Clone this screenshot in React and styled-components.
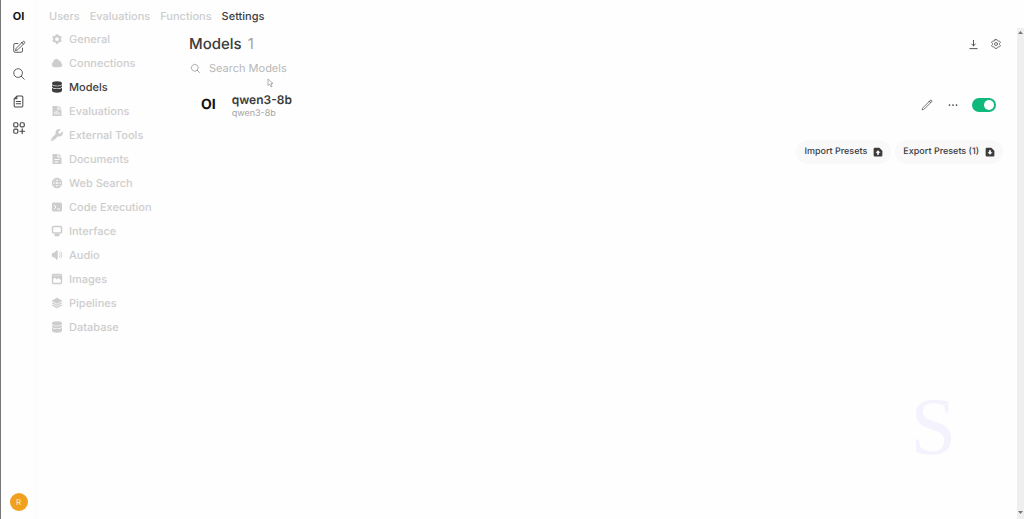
import React, { useState } from 'react'
import styled, { createGlobalStyle } from 'styled-components'
import {
  HiCog6Tooth,
  HiCloud,
  HiSpeakerWave,
  HiSquare3Stack3D,
  HiEllipsisHorizontal,
  HiOutlinePencil,
  HiOutlinePencilSquare,
  HiOutlineMagnifyingGlass,
  HiOutlineCog6Tooth
} from 'react-icons/hi2'
import { FaWrench } from 'react-icons/fa6'

const color = {
  text: '#3c3c3c',
  muted: '#cdcdcd',
  mutedDark: '#a4a4a4',
  accent: '#0fb97c',
  avatar: '#f0a01c',
  pill: '#f9f9fa',
  track: '#efefef'
}

const GlobalStyle = createGlobalStyle`
  * {
    box-sizing: border-box;
  }
  body {
    margin: 0;
    background: #fefefe;
    color: ${color.text};
    font-family: Inter, "Liberation Sans", sans-serif;
    font-size: 11px;
    line-height: 16px;
    text-rendering: geometricPrecision;
  }
  button, input {
    font: inherit;
    color: inherit;
    text-rendering: inherit;
    border: 0;
    padding: 0;
    background: none;
  }
  a {
    color: inherit;
    text-decoration: none;
  }
  svg {
    display: block;
    flex: none;
  }
`

const Page = styled.div`
  display: flex;
  min-height: 100vh;
  border-left: 1px solid #777777;
`

const Rail = styled.aside`
  display: flex;
  flex-direction: column;
  align-items: center;
  width: 36px;
  padding: 8px 0;
  border-right: 1px solid #fafafa;
`

const Logo = styled.a`
  font-size: ${props => (props.$large ? 14 : 11)}px;
  font-weight: 700;
  line-height: 16px;
  color: #111111;
`

const RailNav = styled.nav`
  display: flex;
  flex-direction: column;
  gap: 13px;
  margin-top: 16px;
`

const IconButton = styled.button`
  display: flex;
  align-items: center;
  justify-content: center;
  width: 14px;
  height: 14px;
  color: #484848;
`

const Avatar = styled.button`
  width: 18px;
  height: 18px;
  margin-top: auto;
  border-radius: 50%;
  background: ${color.avatar};
  color: #fdf0d5;
  font-size: 8px;
  text-align: center;
`

const Main = styled.div`
  display: flex;
  flex: 1;
  flex-direction: column;
  min-width: 0;
`

const Tabs = styled.nav`
  display: flex;
  gap: 10px;
  height: 28px;
  padding: 8px 12px 0;
  font-weight: 500;
`

const Tab = styled.a`
  color: ${props => (props.$active ? color.text : color.muted)};
`

const Body = styled.div`
  display: flex;
  flex: 1;
`

const Menu = styled.nav`
  display: flex;
  flex-direction: column;
  gap: 8px;
  width: 152px;
  padding: 3px 0 0 14px;
`

const MenuItem = styled.a`
  display: flex;
  align-items: center;
  gap: 6px;
  font-weight: 500;
  color: ${props => (props.$active ? color.text : color.muted)};
`

const Content = styled.main`
  display: flex;
  flex: 1;
  flex-direction: column;
  padding: 6px 14px 0 0;
`

const Header = styled.header`
  display: flex;
  align-items: center;
  justify-content: space-between;
  height: 20px;
`

const Title = styled.h1`
  display: flex;
  gap: 6px;
  margin: 0;
  font-size: 15px;
  font-weight: 500;
  line-height: 20px;
`

const Count = styled.span`
  color: ${color.mutedDark};
  font-weight: 400;
`

const Actions = styled.div`
  display: flex;
  align-items: center;
  gap: ${props => props.$gap}px;
`

const Search = styled.label`
  display: flex;
  align-items: center;
  gap: 8px;
  margin-top: 6px;
  padding-left: 1px;
  color: #888888;
`

const SearchInput = styled.input`
  flex: 1;
  height: 16px;
  outline: 0;
  &::placeholder {
    color: #b8b8b8;
    opacity: 1;
  }
`

const ModelRow = styled.article`
  display: flex;
  align-items: center;
  height: 36px;
  margin-top: 11px;
  padding: 0 7px 0 12px;
`

const ModelName = styled.div`
  flex: 1;
  margin-left: 16px;
  padding-top: 2px;
`

const ModelTitle = styled.h2`
  margin: 0;
  font-size: 12px;
  font-weight: 600;
  line-height: 16px;
`

const ModelId = styled.div`
  font-size: 9px;
  line-height: 12px;
  color: ${color.mutedDark};
`

const Switch = styled.input`
  appearance: none;
  display: flex;
  width: 24px;
  height: 14px;
  margin: 0;
  padding: 2px;
  border-radius: 7px;
  background: #dddddd;
  &::before {
    content: '';
    width: 10px;
    height: 10px;
    border-radius: 50%;
    background: #ffffff;
  }
  &:checked {
    justify-content: flex-end;
    background: ${color.accent};
  }
`

const Presets = styled.div`
  display: flex;
  justify-content: flex-end;
  gap: 4px;
  margin-top: 17px;
`

const PresetButton = styled.button`
  display: flex;
  align-items: center;
  gap: 6px;
  height: 24px;
  padding: 0 8px;
  border-radius: 12px;
  background: ${color.pill};
  font-size: 9px;
  font-weight: 500;
`

const Scrollbar = styled.div`
  display: flex;
  flex-direction: column;
  justify-content: space-between;
  align-items: center;
  width: 7px;
  padding: 2px 0 4px;
  background: ${color.track};
`

const Watermark = styled.div`
  position: fixed;
  right: 68px;
  bottom: 46px;
  color: #f3f2fd;
  font-family: "Liberation Serif", serif;
  font-size: 82px;
  line-height: 92px;
  pointer-events: none;
`

const Cursor = styled.svg`
  position: absolute;
  left: 267px;
  top: 78px;
`

const NoteIcon = () => (
  <svg width="13" height="13" viewBox="0 0 24 24" fill="none" stroke="currentColor" strokeWidth="1.9" strokeLinecap="round" strokeLinejoin="round">
    <path d="M9 2h9a2 2 0 0 1 2 2v16a2 2 0 0 1-2 2H6a2 2 0 0 1-2-2V7l5-5v5H4M8 12h8M8 16h8" />
  </svg>
)

const WorkspaceIcon = () => (
  <svg width="14" height="14" viewBox="0 0 24 24" fill="none" stroke="currentColor" strokeWidth="2" strokeLinecap="round">
    <rect x="3" y="3" width="7" height="7" rx="2" />
    <rect x="14" y="3" width="7" height="7" rx="2" />
    <rect x="3" y="14" width="7" height="7" rx="2" />
    <path d="M17.5 13.5v8M13.5 17.5h8" />
  </svg>
)

const StackIcon = () => (
  <svg width="12" height="12" viewBox="0 0 24 24" fill="currentColor">
    <ellipse cx="12" cy="5" rx="10" ry="4.500" />
    <path d="M2 8c2 3.500 18 3.500 20 0v3c0 5-20 5-20 0z" />
    <path d="M2 13.500c2 3.500 18 3.500 20 0V19c0 6-20 6-20 0z" />
  </svg>
)

const ChartDocIcon = () => (
  <svg width="12" height="12" viewBox="0 0 24 24" fill="currentColor" fillRule="evenodd">
    <path d="M3 2h10v7h8v13H3zM15 1l6 6h-6zM7 13v6h2v-6zM11 11v8h2v-8zM15 15v4h2v-4z" />
  </svg>
)

const TextDocIcon = () => (
  <svg width="12" height="12" viewBox="0 0 24 24" fill="currentColor" fillRule="evenodd">
    <path d="M3 2h10v7h8v13H3zM15 1l6 6h-6zM7 12v2h10v-2zM7 17v2h7v-2z" />
  </svg>
)

const GlobeIcon = () => (
  <svg width="12" height="12" viewBox="0 0 24 24" fill="none" stroke="currentColor" strokeWidth="2.6">
    <circle cx="12" cy="12" r="9" />
    <ellipse cx="12" cy="12" rx="4" ry="9" />
    <path d="M3 9h18M3 15h18" />
  </svg>
)

const CodeIcon = () => (
  <svg width="12" height="12" viewBox="0 0 24 24">
    <rect x="2" y="3" width="20" height="18" rx="3" fill="currentColor" />
    <path d="M6 8l4 4-4 4M12 16h6" fill="none" stroke="#ffffff" strokeWidth="2" />
  </svg>
)

const DesktopIcon = () => (
  <svg width="12" height="12" viewBox="0 0 24 24" fill="none" stroke="currentColor" strokeWidth="3" strokeLinejoin="round">
    <rect x="3" y="3" width="18" height="13" rx="2" />
    <path d="M10 17l-2 4h8l-2-4" fill="currentColor" />
  </svg>
)

const PhotoIcon = () => (
  <svg width="12" height="12" viewBox="0 0 24 24" fill="none" stroke="currentColor" strokeWidth="2.8" strokeLinejoin="round">
    <rect x="3" y="3" width="18" height="18" rx="2" />
    <path d="M4 5h16v9l-5-4-4 3-3-4-4 3z" fill="currentColor" stroke="none" />
  </svg>
)

const DownloadIcon = () => (
  <svg width="11" height="11" viewBox="0 0 24 24" fill="none" stroke="currentColor" strokeWidth="2" strokeLinecap="round" strokeLinejoin="round">
    <path d="M12 3v12M8 11l4 4 4-4M4 21h16" />
  </svg>
)

const PresetIcon = ({ down }) => (
  <svg width="10" height="10" viewBox="0 0 16 16">
    <path
      fill="currentColor"
      fillRule="evenodd"
      d={
        down
          ? 'M3 1a2 2 0 0 0-2 2v10a2 2 0 0 0 2 2h10a2 2 0 0 0 2-2V6l-5-5zM6.500 5h3v3.500H12L8 12.500 4 8.500h2.500z'
          : 'M3 1a2 2 0 0 0-2 2v10a2 2 0 0 0 2 2h10a2 2 0 0 0 2-2V6l-5-5zM6.500 12.500h3V9H12L8 5 4 9h2.500z'
      }
    />
  </svg>
)

const tabs = ['Users', 'Evaluations', 'Functions', 'Settings']

const menu = [
  ['General', HiCog6Tooth],
  ['Connections', HiCloud],
  ['Models', StackIcon],
  ['Evaluations', ChartDocIcon],
  ['External Tools', FaWrench],
  ['Documents', TextDocIcon],
  ['Web Search', GlobeIcon],
  ['Code Execution', CodeIcon],
  ['Interface', DesktopIcon],
  ['Audio', HiSpeakerWave],
  ['Images', PhotoIcon],
  ['Pipelines', HiSquare3Stack3D],
  ['Database', StackIcon]
]

export default () => {
  const [enabled, setEnabled] = useState(true)

  return (
    <Page>
      <GlobalStyle />
      <Rail>
        <Logo href="#">OI</Logo>
        <RailNav>
          <IconButton aria-label="New Chat"><HiOutlinePencilSquare size={14} /></IconButton>
          <IconButton aria-label="Search"><HiOutlineMagnifyingGlass size={14} /></IconButton>
          <IconButton aria-label="Notes"><NoteIcon /></IconButton>
          <IconButton aria-label="Workspace"><WorkspaceIcon /></IconButton>
        </RailNav>
        <Avatar>R</Avatar>
      </Rail>

      <Main>
        <Tabs>
          {tabs.map(name => (
            <Tab key={name} href="#" $active={name === 'Settings'}>{name}</Tab>
          ))}
        </Tabs>

        <Body>
          <Menu>
            {menu.map(([name, Icon]) => (
              <MenuItem key={name} href="#" $active={name === 'Models'}>
                <Icon size={12} />
                {name}
              </MenuItem>
            ))}
          </Menu>

          <Content>
            <Header>
              <Title>Models <Count>1</Count></Title>
              <Actions $gap={9}>
                <IconButton aria-label="Manage Models"><DownloadIcon /></IconButton>
                <IconButton aria-label="Settings"><HiOutlineCog6Tooth size={12} /></IconButton>
              </Actions>
            </Header>

            <Search>
              <HiOutlineMagnifyingGlass size={11} />
              <SearchInput placeholder="Search Models" aria-label="Search Models" />
            </Search>

            <ModelRow>
              <Logo href="#" $large>OI</Logo>
              <ModelName>
                <ModelTitle>qwen3-8b</ModelTitle>
                <ModelId>qwen3-8b</ModelId>
              </ModelName>
              <Actions $gap={12}>
                <IconButton aria-label="Edit"><HiOutlinePencil size={12} /></IconButton>
                <IconButton aria-label="More"><HiEllipsisHorizontal size={14} /></IconButton>
                <Switch
                  type="checkbox"
                  aria-label="Enabled"
                  checked={enabled}
                  onChange={e => setEnabled(e.target.checked)}
                />
              </Actions>
            </ModelRow>

            <Presets>
              <PresetButton>Import Presets <PresetIcon /></PresetButton>
              <PresetButton>Export Presets (1) <PresetIcon down /></PresetButton>
            </Presets>
          </Content>

          <Scrollbar>
            <svg width="5" height="5" viewBox="0 0 5 5"><path d="M0 4l2.500-3L5 4z" fill="#777777" /></svg>
            <svg width="5" height="5" viewBox="0 0 5 5"><path d="M0 1l2.500 3L5 1z" fill="#777777" /></svg>
          </Scrollbar>
        </Body>
      </Main>

      <Watermark>S</Watermark>
      <Cursor width="7" height="10" viewBox="0 0 14 20">
        <path d="M2 2v13l3-3 3 6 2-1-2-6h4z" fill="#ffffff" stroke="#999999" strokeWidth="1.500" />
      </Cursor>
    </Page>
  )
}
